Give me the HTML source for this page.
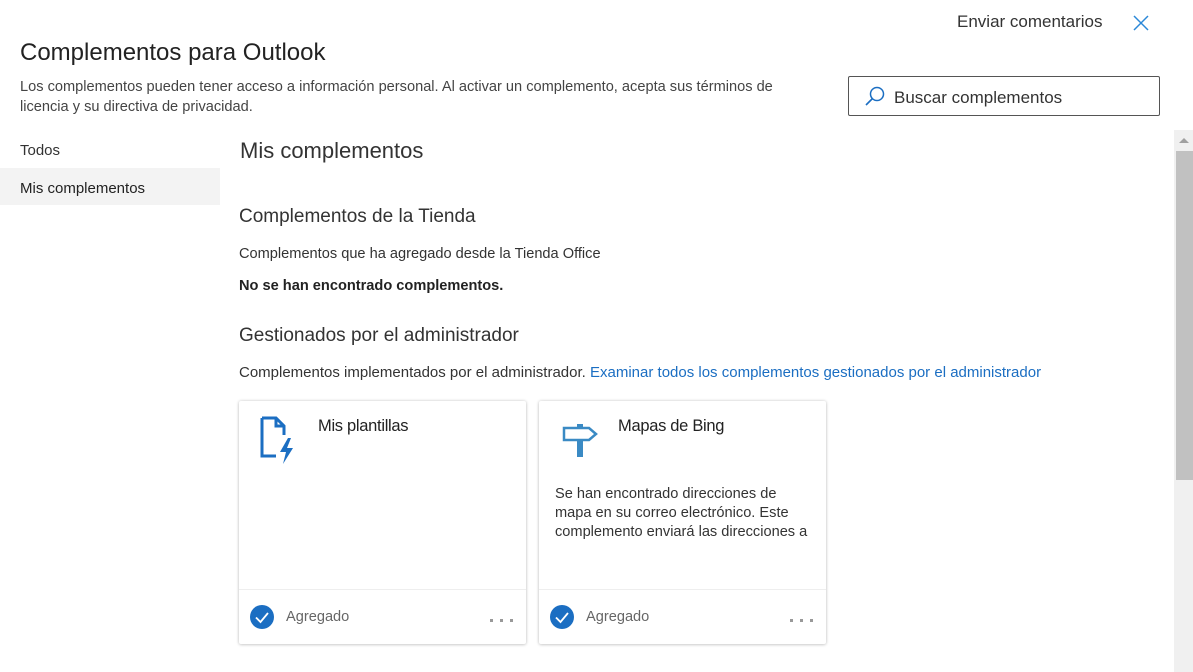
<!DOCTYPE html>
<html><head><meta charset="utf-8"><style>
*{margin:0;padding:0;box-sizing:border-box}
body{width:1193px;height:672px;overflow:hidden;background:#fff;font-family:"Liberation Sans",sans-serif;color:#333;position:relative}
.a{position:absolute;white-space:nowrap}
.card{position:absolute;top:401px;width:287px;height:243px;background:#fff;box-shadow:0 0 3px rgba(0,0,0,.18),0 1px 3px rgba(0,0,0,.12);border-radius:2px}
.card .foot{position:absolute;left:0;right:0;top:188px;border-top:1px solid #eee;height:55px}
.chk{position:absolute;left:11px;top:15px;width:24px;height:24px;border-radius:50%;background:#1b6ec2}
.d{position:absolute;top:29px;width:3px;height:3px;background:#999}
</style></head><body>
<div class="a" style="left:957px;top:12px;font-size:17px;color:#333">Enviar comentarios</div>
<svg class="a" style="left:1132px;top:14px" width="18" height="18" viewBox="0 0 18 18"><path d="M2 2L16 16M16 2L2 16" stroke="#2b88d8" stroke-width="1.5"/></svg>
<div class="a" style="left:20px;top:39px;font-size:24px;color:#222">Complementos para Outlook</div>
<div class="a" style="left:20px;top:77px;font-size:14.6px;line-height:20px;color:#444;white-space:normal;width:790px">Los complementos pueden tener acceso a información personal. Al activar un complemento, acepta sus términos de licencia y su directiva de privacidad.</div>
<div class="a" style="left:848px;top:76px;width:312px;height:40px;border:1px solid #555;border-radius:2px"></div>
<svg class="a" style="left:864px;top:86px" width="22" height="22" viewBox="0 0 22 22"><circle cx="13" cy="8" r="6.5" fill="none" stroke="#1b6ec2" stroke-width="1.5"/><path d="M8.5 12.5L2 19" stroke="#1b6ec2" stroke-width="1.6"/></svg>
<div class="a" style="left:894px;top:88px;font-size:17px;color:#333">Buscar complementos</div>
<div class="a" style="left:20px;top:142px;font-size:15px;color:#333">Todos</div>
<div class="a" style="left:0;top:168px;width:220px;height:37px;background:#f3f3f3"></div>
<div class="a" style="left:20px;top:180px;font-size:15px;color:#222">Mis complementos</div>
<div class="a" style="left:240px;top:138px;font-size:22px;color:#333">Mis complementos</div>
<div class="a" style="left:239px;top:206px;font-size:19px;color:#333">Complementos de la Tienda</div>
<div class="a" style="left:239px;top:246px;font-size:14.6px;color:#333">Complementos que ha agregado desde la Tienda Office</div>
<div class="a" style="left:239px;top:278px;font-size:14.6px;font-weight:bold;color:#222">No se han encontrado complementos.</div>
<div class="a" style="left:239px;top:325px;font-size:19px;color:#333">Gestionados por el administrador</div>
<div class="a" style="left:239px;top:364px;font-size:15px;color:#333">Complementos implementados por el administrador. <span style="color:#1b6ec2">Examinar todos los complementos gestionados por el administrador</span></div>
<div class="card" style="left:239px">
<svg class="a" style="left:20px;top:14px" width="42" height="50" viewBox="0 0 42 50"><path d="M3 3H17L25 11V20M25 11H17V3M3 3V41H17" fill="none" stroke="#1b6ec2" stroke-width="3"/><path d="M29 23L21 37H27L24 49L34 33H28L32 23Z" fill="#1b6ec2"/></svg>
<div class="a" style="left:79px;top:16px;font-size:16.5px;color:#222;letter-spacing:-.3px">Mis plantillas</div>
<div class="foot"><div class="chk"><svg width="24" height="24"><path d="M6 12.5L10.5 17L18 8" fill="none" stroke="#fff" stroke-width="1.8"/></svg></div><div class="a" style="left:47px;top:19px;font-size:14.6px;color:#666">Agregado</div><div class="d" style="left:251px"></div><div class="d" style="left:261px"></div><div class="d" style="left:271px"></div></div>
</div>
<div class="card" style="left:539px">
<svg class="a" style="left:23px;top:22px" width="38" height="36" viewBox="0 0 38 36"><rect x="15" y="1" width="6" height="4" fill="#3a8ac4"/><path d="M2 5H27L34 11L27 17H2Z" fill="none" stroke="#3a8ac4" stroke-width="2.5"/><rect x="15" y="17" width="6" height="17" fill="#3a8ac4"/></svg>
<div class="a" style="left:79px;top:16px;font-size:16.5px;color:#222;letter-spacing:-.3px">Mapas de Bing</div>
<div class="a" style="left:16px;top:84px;font-size:14.6px;line-height:19px;color:#333;white-space:normal;width:262px">Se han encontrado direcciones de mapa en su correo electrónico. Este complemento enviará las direcciones a</div>
<div class="foot"><div class="chk"><svg width="24" height="24"><path d="M6 12.5L10.5 17L18 8" fill="none" stroke="#fff" stroke-width="1.8"/></svg></div><div class="a" style="left:47px;top:19px;font-size:14.6px;color:#666">Agregado</div><div class="d" style="left:251px"></div><div class="d" style="left:261px"></div><div class="d" style="left:271px"></div></div>
</div>
<div class="a" style="left:1174px;top:130px;width:19px;height:542px;background:#f0f0f0"></div>
<svg class="a" style="left:1179px;top:137px" width="10" height="6"><path d="M0 6L5 1L10 6Z" fill="#a0a0a0"/></svg>
<div class="a" style="left:1176px;top:151px;width:17px;height:329px;background:#c1c1c1"></div>
</body></html>
